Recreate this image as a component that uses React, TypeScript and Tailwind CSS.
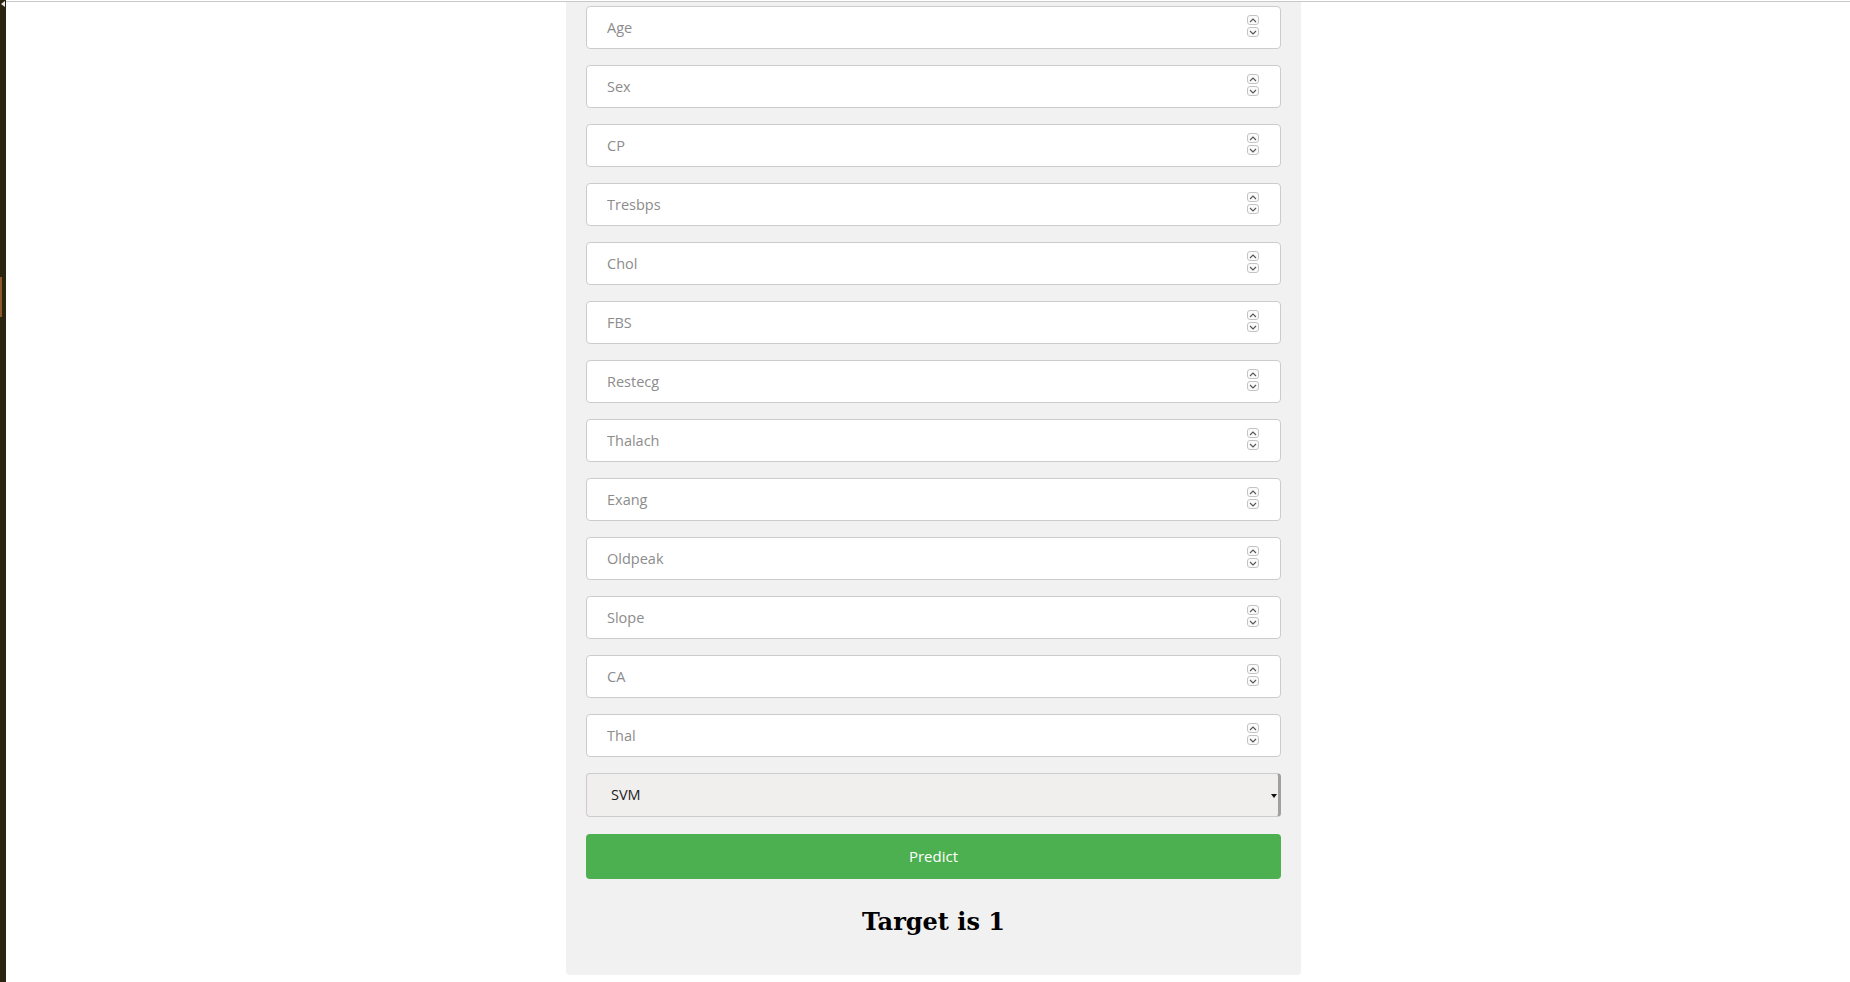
import React from "react";

const fields = [
  "Age",
  "Sex",
  "CP",
  "Tresbps",
  "Chol",
  "FBS",
  "Restecg",
  "Thalach",
  "Exang",
  "Oldpeak",
  "Slope",
  "CA",
  "Thal",
];

function Spinner() {
  return (
    <div className="mb-[3px] mr-[21px] flex flex-col gap-[2px]">
      <div className="flex h-[10px] w-[12px] items-center justify-center rounded-[3px] border border-[#c4c4c4] bg-[#fafafa]">
        <svg width="8" height="5" viewBox="0 0 8 5">
          <path d="M1 4 L4 1 L7 4" fill="none" stroke="#555" strokeWidth="1.1" />
        </svg>
      </div>
      <div className="flex h-[10px] w-[12px] items-center justify-center rounded-[3px] border border-[#c4c4c4] bg-[#fafafa]">
        <svg width="8" height="5" viewBox="0 0 8 5">
          <path d="M1 1 L4 4 L7 1" fill="none" stroke="#555" strokeWidth="1.1" />
        </svg>
      </div>
    </div>
  );
}

function Field({ label }: { label: string }) {
  return (
    <div className="mb-[16px] flex h-[43px] items-center rounded-[4px] border border-[#cccccc] bg-white">
      <input
        type="text"
        placeholder={label}
        className="h-full min-w-0 flex-1 bg-transparent pl-[20px] text-[14.5px] text-[#333] outline-none placeholder:text-[#8c8c8c]"
        style={{ fontFamily: '"Open Sans", "Noto Sans", sans-serif' }}
      />
      <Spinner />
    </div>
  );
}

export default function App() {
  return (
    <div className="flex h-[982px] w-[1850px] overflow-hidden bg-white">
      <div className="flex w-[6px] shrink-0 flex-col bg-[#2a2410]">
        <div className="mt-[1px] ml-[1px] h-0 w-0 border-y-[3px] border-r-[4px] border-y-transparent border-r-[#e8e8e8]" />
        <div className="mt-[270px] h-[40px] w-[2px] bg-[#8a5a2a]" />
      </div>
      <div className="flex min-w-0 flex-1 flex-col">
        <div className="h-[1px] shrink-0 bg-white" />
        <div className="h-[1px] shrink-0 bg-[#c8c8c8]" />
        <div className="min-h-0 flex-1">
          <div className="ml-[560px] w-[735px] rounded-b-[4px] bg-[#f1f1f1] px-[20px] pt-[4px] pb-[39px]">
            {fields.map((f) => (
              <Field key={f} label={f} />
            ))}
            <div
              className="flex h-[44px] items-center justify-between rounded-[4px] border border-[#cccccc] border-r-[3px] border-r-[#a0a0a0] bg-[#f0efee]"
              style={{ fontFamily: '"Open Sans", "Noto Sans", sans-serif' }}
            >
              <span className="pl-[24px] text-[14.5px] text-[#222]">SVM</span>
              <svg width="6" height="4" viewBox="0 0 6 4" className="mr-[1px] mt-[1px]">
                <path d="M0 0 L6 0 L3 4 Z" fill="#111" />
              </svg>
            </div>
            <button
              className="mt-[17px] flex h-[45px] w-full items-center justify-center rounded-[4px] bg-[#4caf50] text-[15px] text-white"
              style={{ fontFamily: '"Open Sans", "Noto Sans", sans-serif' }}
            >
              Predict
            </button>
            <h2
              className="mt-[29px] text-center text-[24px] leading-[28px] font-bold text-black"
              style={{ fontFamily: '"DejaVu Serif", serif' }}
            >
              Target is 1
            </h2>
          </div>
        </div>
      </div>
    </div>
  );
}
